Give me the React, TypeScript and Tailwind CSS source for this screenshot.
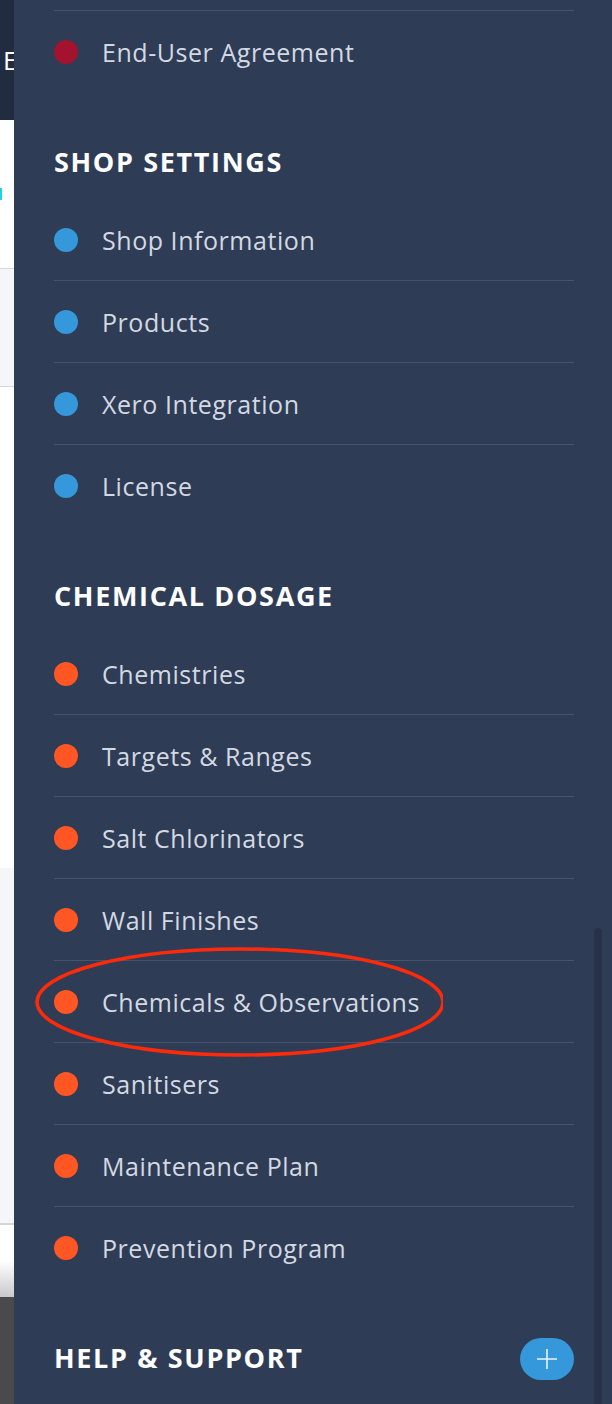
import React from "react";

type Item = { label: string; dot: string };

const agreement: Item[] = [{ label: "End-User Agreement", dot: "bg-[#a3132f]" }];

const shopSettings: Item[] = [
  { label: "Shop Information", dot: "bg-[#3498db]" },
  { label: "Products", dot: "bg-[#3498db]" },
  { label: "Xero Integration", dot: "bg-[#3498db]" },
  { label: "License", dot: "bg-[#3498db]" },
];

const chemicalDosage: Item[] = [
  { label: "Chemistries", dot: "bg-[#ff5624]" },
  { label: "Targets & Ranges", dot: "bg-[#ff5624]" },
  { label: "Salt Chlorinators", dot: "bg-[#ff5624]" },
  { label: "Wall Finishes", dot: "bg-[#ff5624]" },
  { label: "Chemicals & Observations", dot: "bg-[#ff5624]" },
  { label: "Sanitisers", dot: "bg-[#ff5624]" },
  { label: "Maintenance Plan", dot: "bg-[#ff5624]" },
  { label: "Prevention Program", dot: "bg-[#ff5624]" },
];

const Row: React.FC<{ item: Item }> = ({ item }) => (
  <div className="flex items-center h-[82px] border-b border-[#48546d] last:border-b-0 last:h-[81px]">
    <span className={`w-6 h-6 rounded-full shrink-0 ${item.dot}`} />
    <span className="ml-[24px] text-[25px] leading-8 text-[#d3d9e2] tracking-[0.55px]">{item.label}</span>
  </div>
);

const SectionTitle: React.FC<{ title: string }> = ({ title }) => (
  <div className="h-[107px] pt-[54px]">
    <h3 className="text-[27px] leading-8 font-bold text-white tracking-[1.65px] uppercase">{title}</h3>
  </div>
);

export default function App() {
  return (
    <div className="w-[612px] h-[1404px] flex overflow-hidden bg-white" style={{ fontFamily: "'Open Sans', 'Noto Sans', sans-serif" }}>
      {/* page behind the drawer */}
      <div className="w-[14px] shrink-0 flex flex-col overflow-hidden">
        <div className="h-[120px] bg-[#222c41] flex items-center">
          <span className="ml-[3px] text-[26px] text-white leading-none">E</span>
        </div>
        <div className="h-[148px] bg-white pt-[68px]">
          <div className="w-[2px] h-[12px] bg-[#19d3e6]" />
        </div>
        <div className="h-[119px] bg-[#f5f6f8] border-y border-[#d5d8dd]" />
        <div className="h-[481px] bg-white" />
        <div className="h-[357px] bg-[#f5f6f8] border-b-2 border-[#d2d5da]" />
        <div className="h-[72px] bg-gradient-to-b from-white from-50% to-[#c9c9c9]" />
        <div className="flex-1 bg-[#4a4a4a]" />
      </div>

      {/* drawer */}
      <div className="relative flex-1 bg-[#2f3c56] pl-[40px] pr-[38px] pt-[10px]">
        <div className="border-t border-[#48546d]">
          {agreement.map((i) => (
            <Row key={i.label} item={i} />
          ))}
        </div>

        <SectionTitle title="Shop Settings" />
        <div>
          {shopSettings.map((i) => (
            <Row key={i.label} item={i} />
          ))}
        </div>

        <SectionTitle title="Chemical Dosage" />
        <div>
          {chemicalDosage.map((i) => (
            <Row key={i.label} item={i} />
          ))}
        </div>

        <div className="h-[107px] pt-[50px] flex items-start justify-between">
          <h3 className="mt-[4px] text-[27px] leading-8 font-bold text-white tracking-[1.65px] uppercase">Help &amp; Support</h3>
          <button className="w-[54px] h-[42px] rounded-full bg-[#3498db] flex items-center justify-center">
            <svg width="22" height="22" viewBox="0 0 22 22">
              <path d="M11 1v20M1 11h20" stroke="#e8f2fb" strokeWidth="1.6" />
            </svg>
          </button>
        </div>

        {/* scrollbar */}
        <div className="absolute left-[580px] top-[928px] w-2 h-[500px] rounded-full bg-[#27324a]" />

        {/* annotation */}
        <svg className="absolute left-[9px] top-[944px] pointer-events-none" width="420" height="116" viewBox="0 0 420 116">
          <ellipse cx="217" cy="58" rx="203" ry="53" fill="none" stroke="#ff2a0a" strokeWidth="3.5" />
        </svg>
      </div>
    </div>
  );
}
